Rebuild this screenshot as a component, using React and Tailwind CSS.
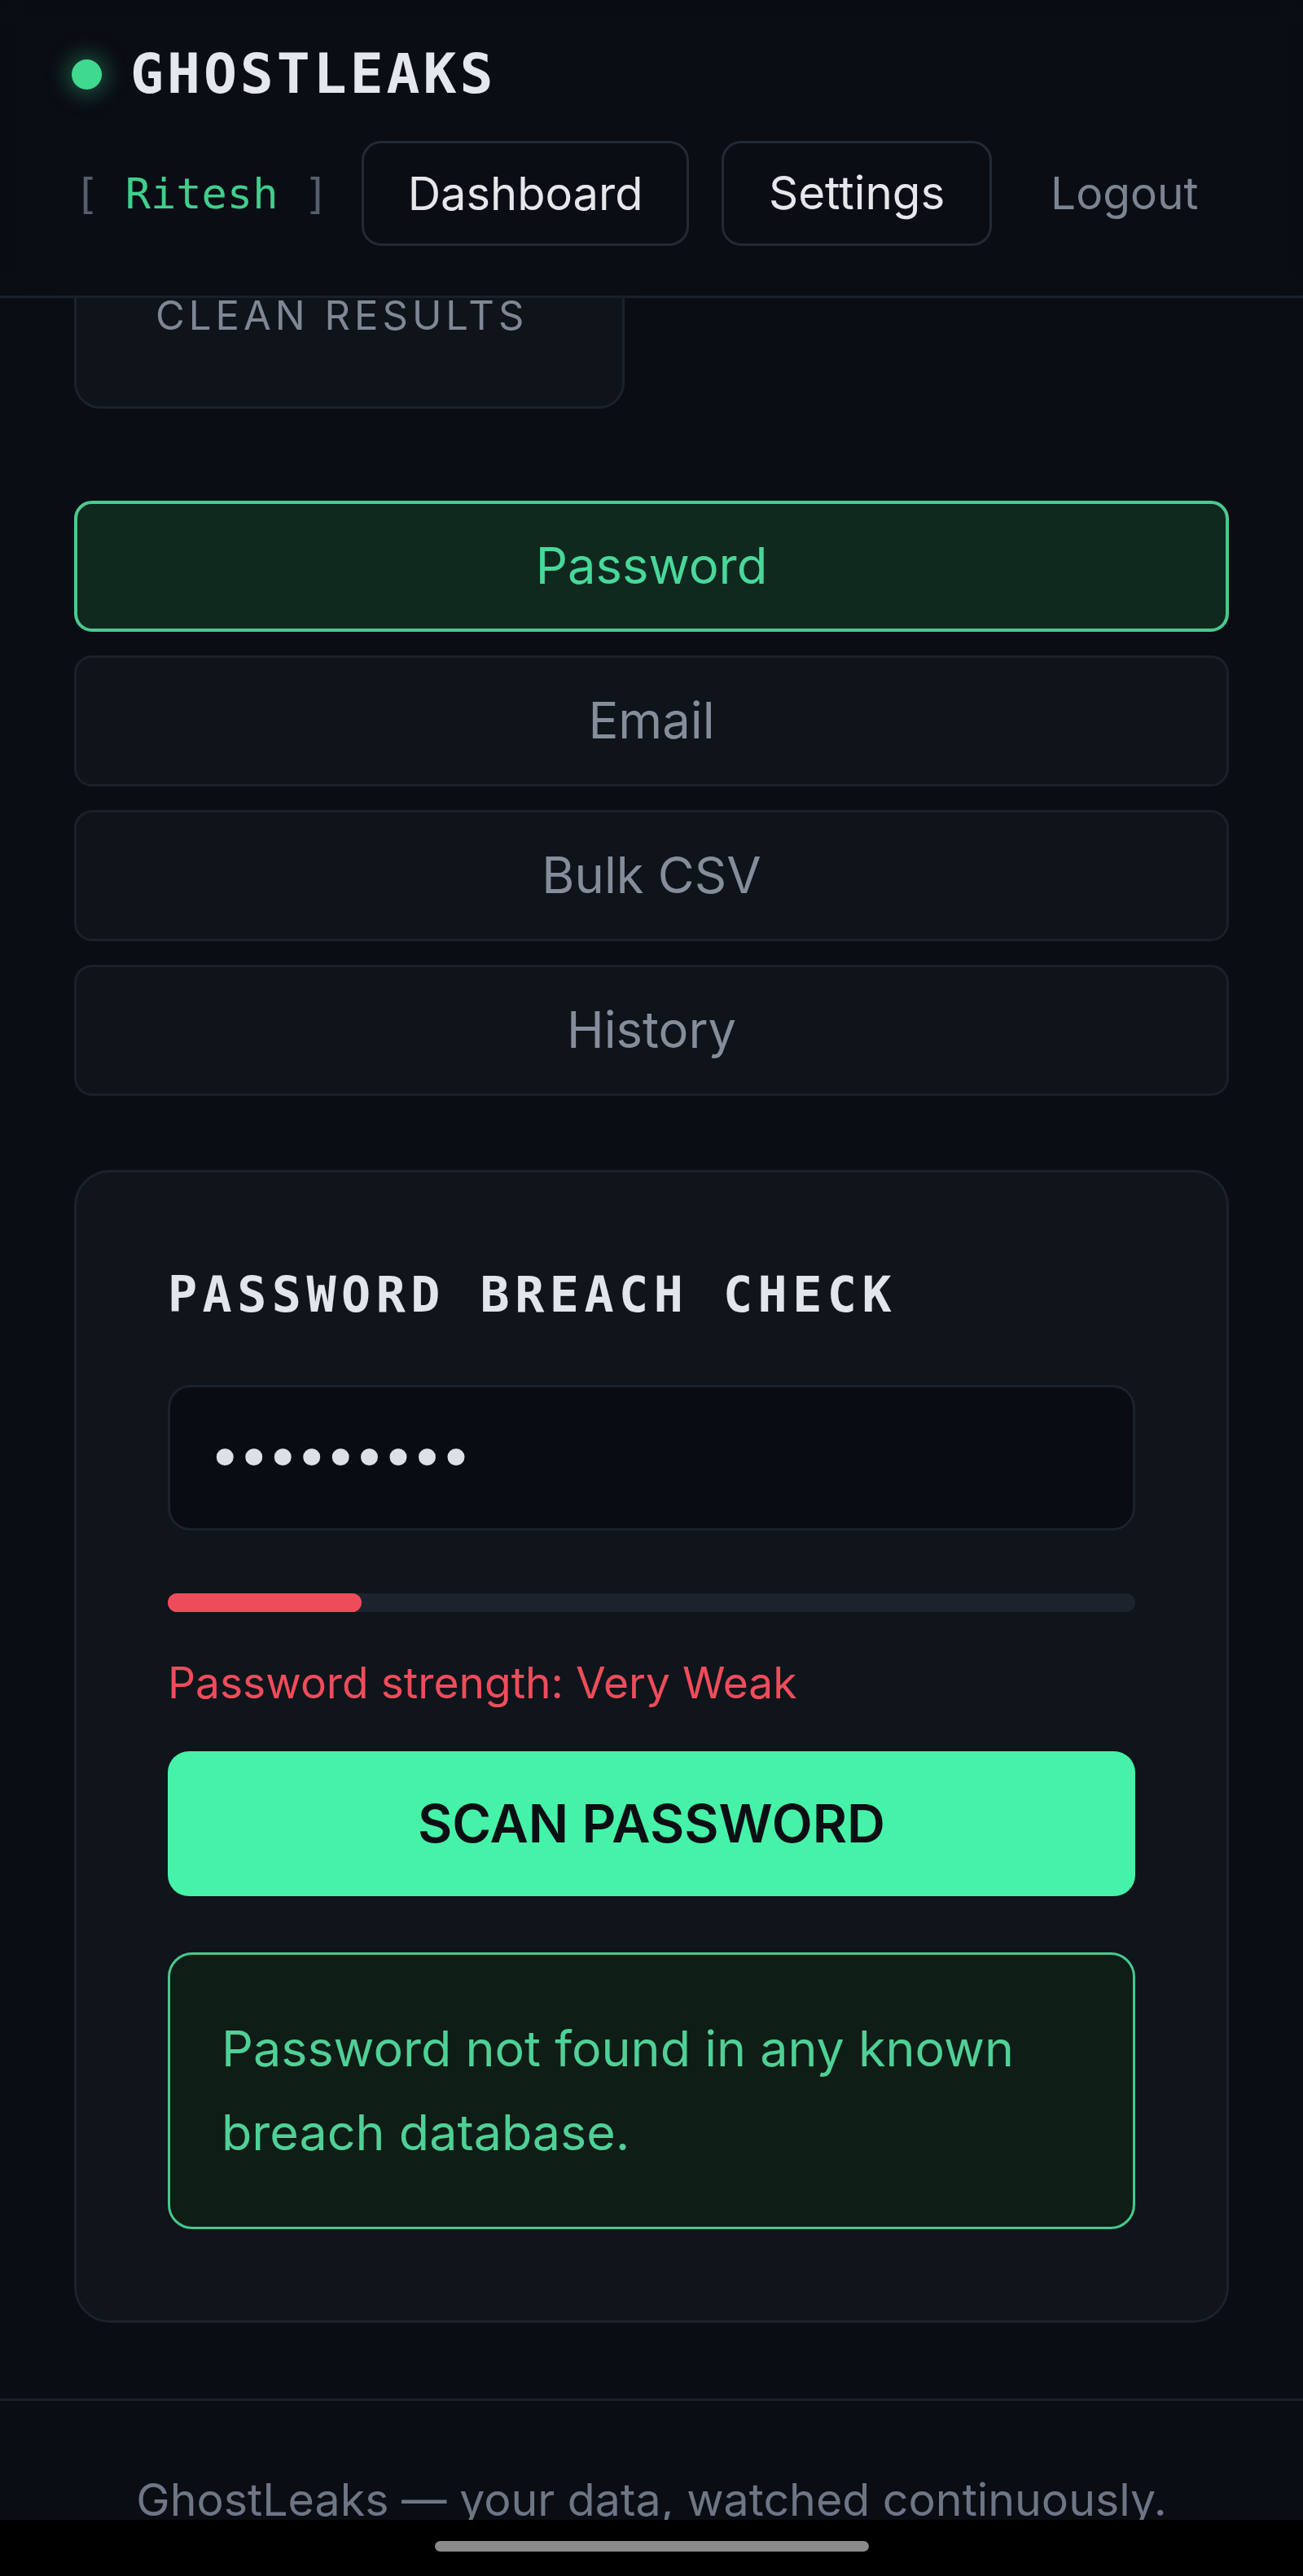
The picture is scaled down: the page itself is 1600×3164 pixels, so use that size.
import React from "react";

const sans = "font-['Inter','Roboto','Liberation_Sans',sans-serif]";
const mono = "font-['DejaVu_Sans_Mono','Liberation_Mono',monospace]";

const tabs = [
  { label: "Password", active: true },
  { label: "Email" },
  { label: "Bulk CSV" },
  { label: "History" },
];

function Header() {
  return (
    <header className="absolute inset-x-0 top-0 z-10 h-[366px] border-b-[3px] border-[#1a2029] bg-[#0a0d14]/90 px-[91px] pt-[57px] backdrop-blur-md">
      <div className="flex h-[68px] items-center gap-[35px]">
        <span className="ml-[-3px] h-[37px] w-[37px] rounded-full bg-[#40d990] shadow-[0_0_26px_6px_rgba(64,217,144,0.35)]" />
        <span className={`${mono} text-[68px] font-bold leading-[68px] tracking-[4px] text-[#e4e7ec]`}>
          GHOSTLEAKS
        </span>
      </div>
      <nav className="mt-[48px] flex h-[129px] items-center gap-[40px]">
        <span className={`${mono} whitespace-pre text-[52px] leading-none`}>
          <span className="text-[#565d6b]">[ </span>
          <span className="text-[#3fcf8c]">Ritesh</span>
          <span className="text-[#565d6b]"> ]</span>
        </span>
        <button className={`${sans} h-[129px] w-[402px] rounded-[24px] border-[3px] border-[#232a35] bg-[#0a0d13] text-[56px] text-[#e5e7eb]`}>
          Dashboard
        </button>
        <button className={`${sans} h-[129px] w-[332px] rounded-[24px] border-[3px] border-[#232a35] bg-[#0a0d13] text-[56.5px] text-[#e5e7eb]`}>
          Settings
        </button>
        <button className={`${sans} h-[129px] px-[32px] text-[55px] text-[#7c8492]`}>Logout</button>
      </nav>
    </header>
  );
}

function StatCard() {
  return (
    <div className="mt-[102px] grid grid-cols-2 gap-[66px]">
      <div className="flex h-[400px] flex-col justify-end rounded-[32px] border-[3px] border-[#1c222b] bg-[#0f131a] pb-[85px] pl-[97px]">
        <span className={`${sans} text-[49px] uppercase leading-[52px] tracking-[5px] text-[#7f8795]`}>
          Clean Results
        </span>
      </div>
    </div>
  );
}

function Tabs() {
  return (
    <div className="mt-[113px] flex flex-col gap-[29px]">
      {tabs.map((t) => (
        <button
          key={t.label}
          className={
            t.active
              ? `${sans} flex h-[161px] items-center justify-center rounded-[22px] border-[4px] border-[#4cc98e] bg-[#0f291f] text-[61.5px] text-[#48d89a]`
              : `${sans} flex h-[161px] items-center justify-center rounded-[22px] border-[3px] border-[#1b2029] bg-[#0f131a] text-[61.5px] text-[#858d9b]`
          }
        >
          {t.label}
        </button>
      ))}
    </div>
  );
}

function BreachCheck() {
  const strength = 20;
  return (
    <section className="mt-[91px] rounded-[44px] border-[3px] border-[#1c222b] bg-[#10141b] px-[112px] pb-[112px] pt-[120px]">
      <h2 className={`${mono} text-[60px] font-bold leading-[60px] tracking-[6.5px] text-[#e2e5ea]`}>
        PASSWORD BREACH CHECK
      </h2>
      <input
        type="password"
        readOnly
        value="ghost2024"
        className="mt-[81px] block h-[179px] w-full rounded-[28px] border-[3px] border-[#1c222b] bg-[#090c12] px-[46px] font-['DejaVu_Sans',sans-serif] text-[72px] tracking-[-7px] text-[#dde1e7] outline-none"
      />
      <div className="mt-[77px] h-[23px] w-full rounded-full bg-[#1d232c]">
        <div className="h-full rounded-full bg-[#ef4c5b]" style={{ width: `${strength}%` }} />
      </div>
      <p className={`${sans} mt-[60px] text-[53.3px] leading-[53px] text-[#ef4c5b]`}>
        Password strength: Very Weak
      </p>
      <button className={`${sans} mt-[58px] flex h-[178px] w-full items-center justify-center rounded-[26px] bg-[#46f2a8] text-[65px] font-semibold text-[#0b0f14]`}>
        SCAN PASSWORD
      </button>
      <div className="mt-[69px] rounded-[30px] border-[3px] border-[#45c98c] bg-[#0e1d16] px-[63px] py-[64px]">
        <p className={`${sans} text-[61px] leading-[103px] text-[#4fd096]`}>
          Password not found in any known breach database.
        </p>
      </div>
    </section>
  );
}

export default function App() {
  return (
    <div className={`${sans} relative h-[3164px] w-full overflow-hidden bg-[#0a0d14]`}>
      <Header />
      <main className="px-[91px]">
        <StatCard />
        <Tabs />
        <BreachCheck />
      </main>
      <footer className="mt-[93px] border-t-[3px] border-[#1a2029] pt-[93px] text-center">
        <p className={`${sans} text-[55.5px] leading-[56px] text-[#6e7685]`}>
          GhostLeaks — your data, watched continuously.
        </p>
      </footer>
      {/* system gesture bar */}
      <div className="absolute inset-x-0 bottom-0 z-20 flex h-[69px] justify-center bg-black pt-[26px]">
        <span className="h-[13px] w-[533px] rounded-full bg-[#8a8a8a]" />
      </div>
    </div>
  );
}
